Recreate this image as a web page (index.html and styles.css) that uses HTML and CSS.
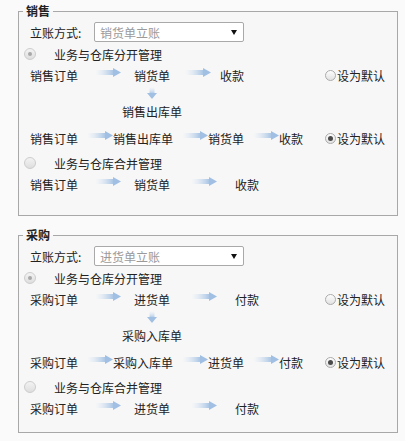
FILE: index.html
```html
<!DOCTYPE html>
<html lang="zh-CN">
<head>
    <meta charset="UTF-8">
    <meta name="viewport" content="width=device-width, initial-scale=1.0">
    <title>单据流程设置</title>
    <link rel="stylesheet" href="styles.css">
</head>
<body>
    <svg class="defs" aria-hidden="true">
        <defs>
            <linearGradient id="shaft-h" x1="0" y1="0" x2="1" y2="0">
                <stop offset="0" stop-color="#d6e4f3" stop-opacity="0"/>
                <stop offset="1" stop-color="#a3c1e3"/>
            </linearGradient>
            <linearGradient id="shaft-v" x1="0" y1="0" x2="0" y2="1">
                <stop offset="0" stop-color="#d6e4f3" stop-opacity="0"/>
                <stop offset="1" stop-color="#a3c1e3"/>
            </linearGradient>
            <symbol id="arrow-right" viewBox="0 0 26 9">
                <rect x="0" y="2" width="19" height="5" fill="url(#shaft-h)"/>
                <polygon points="18,0 26,4.5 18,9" fill="#a0bfe2"/>
            </symbol>
            <symbol id="arrow-down" viewBox="0 0 10 12">
                <rect x="2.5" y="0" width="5" height="7" fill="url(#shaft-v)"/>
                <polygon points="0,6 10,6 5,12" fill="#a0bfe2"/>
            </symbol>
        </defs>
    </svg>

    <div class="page">
        <!-- 销售 -->
        <fieldset class="group">
            <legend>销售</legend>
            <div class="setup">
                <span class="setup-label">立账方式:</span>
                <div class="select"><span>销货单立账</span><span class="caret"></span></div>
            </div>

            <div class="mode">
                <span class="radio on"></span>
                <span>业务与仓库分开管理</span>
            </div>
            <div class="flow">
                <span>销售订单</span>
                <span class="link link-a"><svg class="arrow"><use href="#arrow-right"/></svg></span>
                <span>销货单</span>
                <span class="link link-b"><svg class="arrow"><use href="#arrow-right"/></svg></span>
                <span>收款</span>
                <label class="default"><span class="pick"></span>设为默认</label>
            </div>
            <div class="branch"><svg class="arrow-down"><use href="#arrow-down"/></svg></div>
            <div class="branch-label">销售出库单</div>
            <div class="flow flow-mid">
                <span>销售订单</span>
                <span class="link"><svg class="arrow"><use href="#arrow-right"/></svg></span>
                <span>销售出库单</span>
                <span class="link"><svg class="arrow"><use href="#arrow-right"/></svg></span>
                <span>销货单</span>
                <span class="link"><svg class="arrow"><use href="#arrow-right"/></svg></span>
                <span>收款</span>
                <label class="default"><span class="pick on"></span>设为默认</label>
            </div>

            <div class="mode mode-merged">
                <span class="radio"></span>
                <span>业务与仓库合并管理</span>
            </div>
            <div class="flow flow-end">
                <span>销售订单</span>
                <span class="link link-a"><svg class="arrow"><use href="#arrow-right"/></svg></span>
                <span>销货单</span>
                <span class="link link-c"><svg class="arrow"><use href="#arrow-right"/></svg></span>
                <span>收款</span>
            </div>
        </fieldset>

        <!-- 采购 -->
        <fieldset class="group group-short">
            <legend>采购</legend>
            <div class="setup">
                <span class="setup-label">立账方式:</span>
                <div class="select"><span>进货单立账</span><span class="caret"></span></div>
            </div>

            <div class="mode">
                <span class="radio on"></span>
                <span>业务与仓库分开管理</span>
            </div>
            <div class="flow">
                <span>采购订单</span>
                <span class="link link-a"><svg class="arrow"><use href="#arrow-right"/></svg></span>
                <span>进货单</span>
                <span class="link link-c"><svg class="arrow"><use href="#arrow-right"/></svg></span>
                <span>付款</span>
                <label class="default"><span class="pick"></span>设为默认</label>
            </div>
            <div class="branch"><svg class="arrow-down"><use href="#arrow-down"/></svg></div>
            <div class="branch-label">采购入库单</div>
            <div class="flow flow-mid">
                <span>采购订单</span>
                <span class="link"><svg class="arrow"><use href="#arrow-right"/></svg></span>
                <span>采购入库单</span>
                <span class="link"><svg class="arrow"><use href="#arrow-right"/></svg></span>
                <span>进货单</span>
                <span class="link"><svg class="arrow"><use href="#arrow-right"/></svg></span>
                <span>付款</span>
                <label class="default"><span class="pick on"></span>设为默认</label>
            </div>

            <div class="mode mode-merged">
                <span class="radio"></span>
                <span>业务与仓库合并管理</span>
            </div>
            <div class="flow flow-end">
                <span>采购订单</span>
                <span class="link link-a"><svg class="arrow"><use href="#arrow-right"/></svg></span>
                <span>进货单</span>
                <span class="link link-c"><svg class="arrow"><use href="#arrow-right"/></svg></span>
                <span>付款</span>
            </div>
        </fieldset>
    </div>
</body>
</html>
```

FILE: styles.css
```css
body {
    margin: 0;
    background-color: #fafafa;
    font-family: "Noto Sans CJK SC", sans-serif;
    font-size: 12px;
    color: #222;
}
.defs {
    display: block;
    width: 0;
    height: 0;
    overflow: hidden;
}
.page {
    padding: 2px 7px 0 18px;
}
.group {
    margin: 0;
    padding: 0 12px 21px 11px;
    border: 1px solid #a8a8a8;
    background: #f7f7f7;
    min-width: 0;
}
.group + .group {
    margin-top: 10px;
}
.group-short {
    padding-bottom: 14px;
}
.group legend {
    margin-left: -7px;
    padding: 0 3px;
    font-weight: bold;
    line-height: 18px;
}
.setup {
    display: flex;
    align-items: center;
    height: 24px;
}
.setup-label {
    width: 64px;
}
.select {
    width: 150px;
    height: 20px;
    box-sizing: border-box;
    border: 1px solid #a9a9a9;
    border-radius: 2px;
    background: #fff;
    display: flex;
    align-items: center;
    justify-content: space-between;
    padding: 0 6px 0 5px;
    color: #9a9a9a;
}
.caret {
    width: 0;
    height: 0;
    border-left: 3px solid transparent;
    border-right: 3px solid transparent;
    border-top: 5px solid #111;
}
.mode {
    display: flex;
    align-items: center;
    height: 20px;
    margin-left: -6px;
}
.mode-merged {
    height: 22px;
}
.radio {
    width: 12px;
    height: 12px;
    box-sizing: border-box;
    border: 1px solid #cdcdcd;
    border-radius: 50%;
    background: linear-gradient(#f3f3f3, #dedede);
    margin-right: 18px;
    display: flex;
    align-items: center;
    justify-content: center;
}
.radio.on::after {
    content: "";
    width: 4px;
    height: 4px;
    border-radius: 50%;
    background: #a8a8a8;
}
.flow {
    display: flex;
    align-items: center;
    height: 22px;
    white-space: nowrap;
}
.flow-mid {
    height: 28px;
}
.flow-end {
    height: 20px;
}
.link {
    display: flex;
    width: 35px;
    padding-left: 9px;
    box-sizing: border-box;
}
.link-a {
    width: 56px;
    padding-left: 17px;
}
.link-b {
    width: 50px;
    padding-left: 15px;
}
.link-c {
    width: 65px;
    padding-left: 21px;
}
.arrow {
    width: 26px;
    height: 9px;
    flex: none;
    margin-bottom: 6px;
}
.default {
    margin-left: auto;
    display: flex;
    align-items: center;
    gap: 1px;
}
.pick {
    width: 11px;
    height: 11px;
    box-sizing: border-box;
    border: 1px solid #ababab;
    border-radius: 50%;
    background: linear-gradient(#fdfdfd, #e2e2e2);
    display: flex;
    align-items: center;
    justify-content: center;
}
.pick.on::after {
    content: "";
    width: 5px;
    height: 5px;
    border-radius: 50%;
    background: #4a4a4a;
}
.branch {
    display: flex;
    align-items: center;
    height: 14px;
    padding-left: 117px;
}
.arrow-down {
    width: 10px;
    height: 12px;
}
.branch-label {
    height: 24px;
    line-height: 24px;
    padding-left: 92px;
}
```
